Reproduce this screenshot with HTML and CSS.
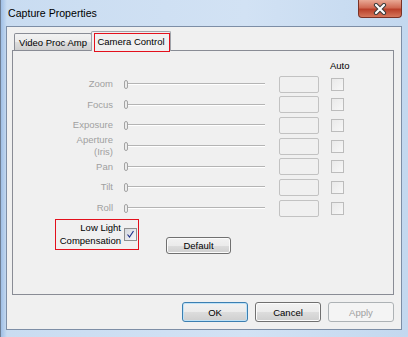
FILE: index.html
```html
<!DOCTYPE html>
<html lang="en">
  <head>
    <meta charset="UTF-8" />
    <meta name="viewport" content="width=device-width, initial-scale=1.0" />
    <title>Capture Properties</title>
    <link rel="stylesheet" href="styles.css">
  </head>
  <body>
    <div class="window">
      <div class="titlebar">
        <span class="title">Capture Properties</span>
        <div class="close">
          <svg width="16" height="12" viewBox="0 0 16 12">
            <path d="M4 2 L12 10 M12 2 L4 10" stroke="#3b3b3b" stroke-width="4.2" stroke-linecap="round" />
            <path d="M4 2 L12 10 M12 2 L4 10" stroke="#ffffff" stroke-width="2.2" stroke-linecap="round" />
          </svg>
        </div>
      </div>

      <div class="client">
        <div class="tabs">
          <div class="tab">Video Proc Amp</div>
          <div class="tab active">Camera Control</div>
        </div>

        <div class="page">
          <div class="controls">
            <div class="auto-head">Auto</div>

            <div class="label">Zoom</div>
            <div class="slider"><span class="thumb"></span><span class="track"></span></div>
            <div class="edit"></div>
            <div class="check"></div>

            <div class="label">Focus</div>
            <div class="slider"><span class="thumb"></span><span class="track"></span></div>
            <div class="edit"></div>
            <div class="check"></div>

            <div class="label">Exposure</div>
            <div class="slider"><span class="thumb"></span><span class="track"></span></div>
            <div class="edit"></div>
            <div class="check"></div>

            <div class="label">Aperture<br />(Iris)</div>
            <div class="slider"><span class="thumb"></span><span class="track"></span></div>
            <div class="edit"></div>
            <div class="check"></div>

            <div class="label">Pan</div>
            <div class="slider"><span class="thumb"></span><span class="track"></span></div>
            <div class="edit"></div>
            <div class="check"></div>

            <div class="label">Tilt</div>
            <div class="slider"><span class="thumb"></span><span class="track"></span></div>
            <div class="edit"></div>
            <div class="check"></div>

            <div class="label">Roll</div>
            <div class="slider"><span class="thumb"></span><span class="track"></span></div>
            <div class="edit"></div>
            <div class="check"></div>
          </div>

          <div class="extra">
            <div class="lowlight">
              <span class="lowlight-text">Low Light<br />Compensation</span>
              <span class="check checked">
                <svg width="11" height="11" viewBox="0 0 11 11">
                  <path d="M2.5 5.5 L4.5 8 L8.5 2" fill="none" stroke="#22348c" stroke-width="1.2" />
                </svg>
              </span>
            </div>
            <button class="btn default-btn">Default</button>
          </div>
        </div>

        <div class="buttons">
          <button class="btn ok">OK</button>
          <button class="btn">Cancel</button>
          <button class="btn disabled">Apply</button>
        </div>
      </div>
    </div>
  </body>
</html>
```

FILE: styles.css
```css
body {
  margin: 0;
  font-family: "Liberation Sans", Arial, sans-serif;
  font-size: 9.5px;
}

.window {
  width: 408px;
  height: 337px;
  box-sizing: border-box;
  border-left: 1px solid #6f7f95;
  background: linear-gradient(90deg, #9fbfe6 0, #c9dcf1 6px, #d2e2f4 60%, #c3d8ef 100%);
  display: flex;
  flex-direction: column;
}

.titlebar {
  height: 26px;
  display: flex;
  align-items: flex-start;
}

.title {
  padding-left: 7px;
  line-height: 26px;
  font-size: 10.6px;
  color: #000;
}

.close {
  margin-left: auto;
  margin-right: 6px;
  width: 44px;
  height: 18px;
  box-sizing: border-box;
  border: 1px solid #7a3226;
  border-top: none;
  border-radius: 0 0 4px 4px;
  background: linear-gradient(#e9a995, #d06a53 45%, #b9402a 55%, #d6775c);
  display: flex;
  align-items: center;
  justify-content: center;
}

.client {
  margin-left: 5px;
  width: 396px;
  height: 304px;
  box-sizing: border-box;
  border: 1px solid #7d8ea6;
  background: #f0f0f0;
  padding: 4px 7px 0 5px;
  display: flex;
  flex-direction: column;
}

.tabs {
  height: 19px;
  display: flex;
  align-items: flex-end;
  padding-left: 2px;
}

.tab {
  width: 78px;
  height: 17px;
  box-sizing: border-box;
  border: 1px solid #898c95;
  border-bottom: none;
  border-radius: 2px 2px 0 0;
  background: linear-gradient(#f2f2f2, #ebebeb 50%, #dddddd 50%, #cfcfcf);
  text-align: center;
  line-height: 17px;
  color: #000;
}

.tab.active {
  position: relative;
  width: 80px;
  height: 20px;
  margin-left: -1px;
  margin-bottom: -1px;
  border-color: #a0a3aa;
  background: #f0f0f0;
  line-height: 20px;
  z-index: 1;
}

/* red highlight drawn over the selected tab */
.tab.active::after {
  content: "";
  position: absolute;
  left: 2px;
  top: 1px;
  width: 76px;
  height: 19px;
  box-sizing: border-box;
  border: 1px solid #e3101c;
}

.page {
  height: 245px;
  box-sizing: border-box;
  border: 1px solid #898c95;
  background: #f0f0f0;
  padding-top: 8px;
}

.controls {
  display: grid;
  grid-template-columns: 100px 152px 54px 25px;
  grid-template-rows: 13px;
  grid-auto-rows: 17px;
  row-gap: 3.67px;
}

.auto-head {
  grid-column: 4;
  padding-left: 11px;
  line-height: 13px;
  white-space: nowrap;
  color: #000;
}

.label {
  grid-column: 1;
  align-self: center;
  text-align: right;
  line-height: 12px;
  color: #a0a0a0;
}

.slider {
  margin-left: 11px;
  display: flex;
  align-items: center;
}

.thumb {
  width: 4px;
  height: 9px;
  box-sizing: border-box;
  border: 1px solid #a4a4a4;
  border-radius: 2px;
  background: #ececec;
}

.track {
  flex: 1;
  height: 1px;
  border-top: 1px solid #b4b4b4;
  background: #ffffff;
}

.edit {
  justify-self: end;
  width: 40px;
  box-sizing: border-box;
  border: 1px solid #c2c2c2;
  border-radius: 2px;
  background: #f0f0f0;
}

.check {
  justify-self: end;
  align-self: center;
  width: 13px;
  height: 13px;
  box-sizing: border-box;
  border: 1px solid #bcbcbc;
  background: linear-gradient(135deg, #e9e9e9, #f7f7f7);
}

.extra {
  margin-top: 2px;
  display: flex;
  align-items: flex-start;
}

.lowlight {
  margin-left: 42px;
  width: 84px;
  height: 31px;
  box-sizing: border-box;
  border: 1px solid #e3101c;
  display: flex;
  align-items: center;
  justify-content: flex-end;
  padding-right: 1px;
}

.lowlight-text {
  text-align: right;
  line-height: 13px;
  color: #000;
}

.check.checked {
  margin-left: 3px;
  border-color: #8e8f8f;
  background: linear-gradient(135deg, #d4d8de, #f6f7f9);
  display: flex;
  align-items: center;
  justify-content: center;
}

.btn {
  font-family: "Liberation Sans", Arial, sans-serif;
  font-size: 9.5px;
  color: #000;
  width: 66px;
  height: 20px;
  padding: 0;
  box-sizing: border-box;
  border: 1px solid #707070;
  border-radius: 3px;
  background: linear-gradient(#f2f2f2, #ebebeb 50%, #dddddd 50%, #cfcfcf);
  box-shadow: inset 0 0 0 1px #fbfbfb;
}

.default-btn {
  margin-left: 27px;
  margin-top: 18px;
  width: 65px;
  height: 17px;
}

.buttons {
  margin-top: 7px;
  display: flex;
  justify-content: flex-end;
  gap: 7px;
}

.btn.ok {
  border-color: #3c7fb1;
  box-shadow: inset 0 0 0 1px #bfe2f7;
}

.btn.disabled {
  border-color: #adb2b5;
  background: #f4f4f4;
  color: #a0a0a0;
  box-shadow: none;
}
```
